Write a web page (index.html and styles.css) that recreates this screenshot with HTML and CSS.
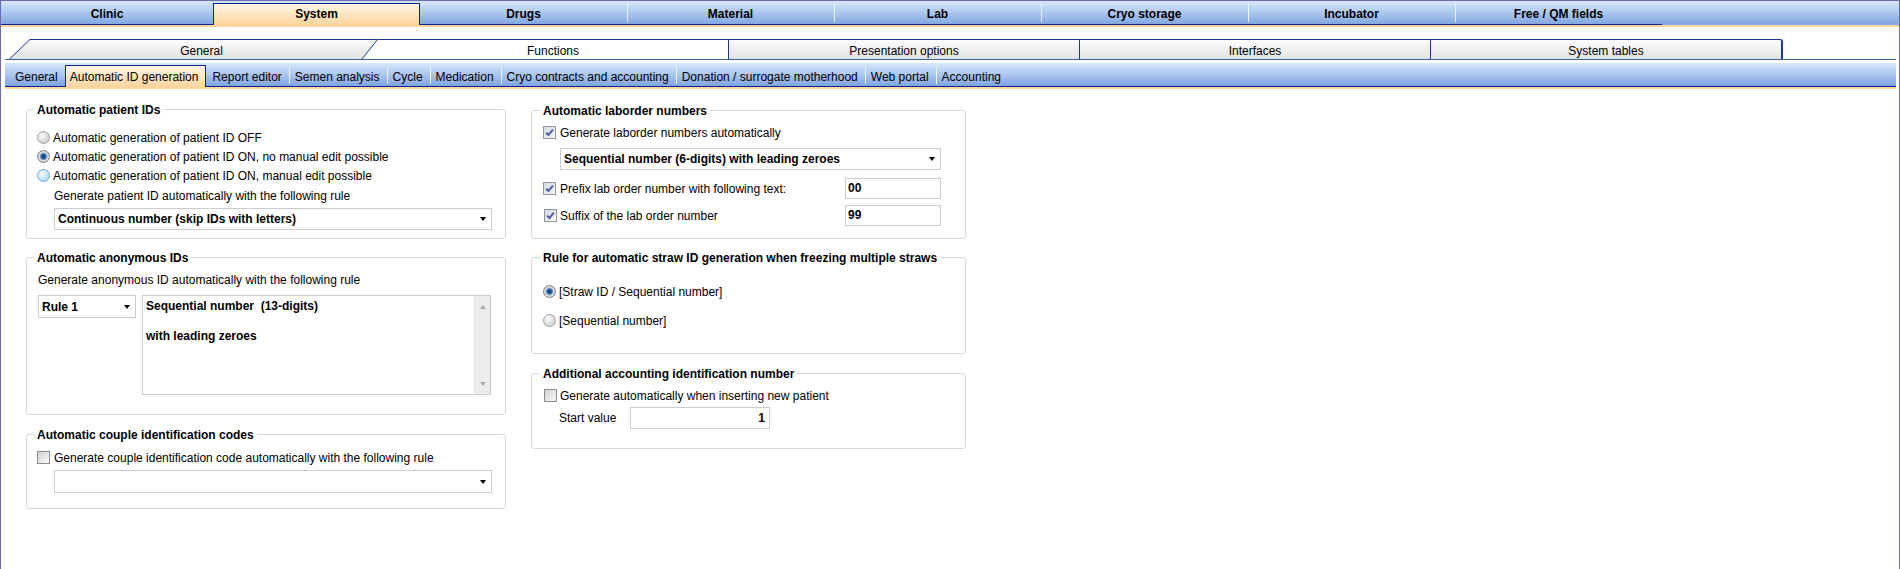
FILE: index.html
```html
<!DOCTYPE html>
<html lang="en">
<head>
<meta charset="utf-8">
<title>System – Functions – Automatic ID generation</title>
<link rel="stylesheet" href="styles.css">
</head>
<body>
<div class="window">
  <nav class="main-tabs">
    <a class="main-tab main-tab--first">Clinic</a>
    <a class="main-tab is-active">System</a>
    <a class="main-tab">Drugs</a>
    <a class="main-tab">Material</a>
    <a class="main-tab">Lab</a>
    <a class="main-tab">Cryo storage</a>
    <a class="main-tab">Incubator</a>
    <a class="main-tab">Free / QM fields</a>
  </nav>

  <div class="section-tabs">
    <a class="section-tab section-tab--slanted">General</a>
    <a class="section-tab is-active">Functions</a>
    <a class="section-tab">Presentation options</a>
    <a class="section-tab">Interfaces</a>
    <a class="section-tab section-tab--last">System tables</a>
  </div>

  <nav class="page-tabs">
    <a class="page-tab">General</a>
    <a class="page-tab is-active">Automatic ID generation</a>
    <a class="page-tab">Report editor</a>
    <a class="page-tab">Semen analysis</a>
    <a class="page-tab">Cycle</a>
    <a class="page-tab">Medication</a>
    <a class="page-tab">Cryo contracts and accounting</a>
    <a class="page-tab">Donation / surrogate motherhood</a>
    <a class="page-tab">Web portal</a>
    <a class="page-tab">Accounting</a>
  </nav>

  <main class="settings">
    <div class="settings__col settings__col--left">
      <section class="group group--patient">
        <h3 class="group__title">Automatic patient IDs</h3>
        <div class="choice-list">
          <label class="choice"><span class="radio"></span>Automatic generation of patient ID OFF</label>
          <label class="choice"><span class="radio is-on"></span>Automatic generation of patient ID ON, no manual edit possible</label>
          <label class="choice"><span class="radio is-hover"></span>Automatic generation of patient ID ON, manual edit possible</label>
        </div>
        <div class="indent">
          <p class="hint hint--patient">Generate patient ID automatically with the following rule</p>
          <div class="combo combo--patient"><span class="combo__value">Continuous number (skip IDs with letters)</span></div>
        </div>
      </section>

      <section class="group group--anon">
        <h3 class="group__title">Automatic anonymous IDs</h3>
        <p class="hint hint--anon">Generate anonymous ID automatically with the following rule</p>
        <div class="rule-row">
          <div class="combo combo--rule"><span class="combo__value">Rule 1</span></div>
          <div class="memo">
            <p class="memo__text">Sequential number&nbsp; (13-digits)<br><br>with leading zeroes</p>
            <div class="memo__scroll">
              <span class="memo__arrow memo__arrow--up"></span>
              <span class="memo__arrow memo__arrow--down"></span>
            </div>
          </div>
        </div>
      </section>

      <section class="group group--couple">
        <h3 class="group__title">Automatic couple identification codes</h3>
        <label class="choice choice--couple"><span class="check"></span>Generate couple identification code automatically with the following rule</label>
        <div class="indent">
          <div class="combo combo--couple"><span class="combo__value"></span></div>
        </div>
      </section>
    </div>

    <div class="settings__col settings__col--right">
      <section class="group group--wide group--laborder">
        <h3 class="group__title">Automatic laborder numbers</h3>
        <label class="choice choice--laborder">
          <span class="check is-on"><svg viewBox="0 0 11 11"><path d="M2.2 5.6 L4.4 8 L8.9 2.6" fill="none" stroke="#4a58ab" stroke-width="1.9"/></svg></span>Generate laborder numbers automatically
        </label>
        <div class="indent indent--wide">
          <div class="combo combo--laborder"><span class="combo__value">Sequential number (6-digits) with leading zeroes</span></div>
        </div>
        <div class="field-row field-row--prefix">
          <label class="choice">
            <span class="check is-on"><svg viewBox="0 0 11 11"><path d="M2.2 5.6 L4.4 8 L8.9 2.6" fill="none" stroke="#4a58ab" stroke-width="1.9"/></svg></span>Prefix lab order number with following text:
          </label>
          <span class="textbox">00</span>
        </div>
        <div class="field-row field-row--suffix">
          <label class="choice">
            <span class="check is-on"><svg viewBox="0 0 11 11"><path d="M2.2 5.6 L4.4 8 L8.9 2.6" fill="none" stroke="#4a58ab" stroke-width="1.9"/></svg></span>Suffix of the lab order number
          </label>
          <span class="textbox">99</span>
        </div>
      </section>

      <section class="group group--wide group--straw">
        <h3 class="group__title">Rule for automatic straw ID generation when freezing multiple straws</h3>
        <label class="choice choice--straw-first"><span class="radio is-on"></span>[Straw ID / Sequential number]</label>
        <label class="choice choice--straw-second"><span class="radio"></span>[Sequential number]</label>
      </section>

      <section class="group group--wide group--accounting">
        <h3 class="group__title">Additional accounting identification number</h3>
        <label class="choice choice--accounting"><span class="check"></span>Generate automatically when inserting new patient</label>
        <div class="start-row">
          <span class="start-row__label">Start value</span>
          <span class="textbox textbox--number">1</span>
        </div>
      </section>
    </div>
  </main>
</div>
</body>
</html>
```

FILE: styles.css
```css
* {
  box-sizing: border-box;
}

html,
body {
  margin: 0;
  background: #fff;
}

body {
  font: 12px/14px "Liberation Sans", Arial, sans-serif;
  color: #000;
}

p,
h3 {
  margin: 0;
}

a {
  color: inherit;
  text-decoration: none;
}

.window {
  height: 569px;
  border: 1px solid #6b6bb6;
  border-bottom: 0;
  overflow: hidden;
  background: #fff;
}

/* ---- top level module tabs ---- */
.main-tabs {
  display: flex;
  height: 26px;
  border-bottom: 2px solid #fdd59d;
  background: linear-gradient(#d7e8fb, #7fa4e1);
}

.main-tab {
  flex: none;
  width: 207px;
  height: 24px;
  padding-top: 6px;
  line-height: 15px;
  text-align: center;
  font-weight: bold;
  border-bottom: 1px solid #0d2291;
  background: linear-gradient(#eef4fd, #eef4fd) 0 3px / 1px 18px no-repeat;
}

.main-tab--first {
  width: 212px;
  background: none;
}

.main-tab.is-active {
  margin-top: 2px;
  height: 22px;
  padding-top: 3px;
  border: 1px solid #0d2291;
  border-bottom: 0;
  background: linear-gradient(#fff5e4, #fdd59d);
}

.main-tab.is-active + .main-tab {
  background: none;
}

/* ---- section tabs (General / Functions / ...) ---- */
.section-tabs {
  display: flex;
  height: 21px;
  margin: 12px 3px 0 4px;
  padding-left: 4px;
  border-bottom: 1px solid #3e5e9e;
}

.section-tab {
  flex: none;
  width: 351px;
  height: 20px;
  padding-top: 3px;
  line-height: 16px;
  text-align: center;
  border-top: 1px solid #1b3b9b;
  border-left: 1px solid #1b3b9b;
  background: linear-gradient(#fdfdfd, #e2e2e2);
}

.section-tab--slanted {
  width: 369px;
  padding: 4px 0 0 16px;
  border: 0;
  background: url("data:image/svg+xml,%3Csvg xmlns='http://www.w3.org/2000/svg' width='369' height='20'%3E%3Cdefs%3E%3ClinearGradient id='g' x1='0' y1='0' x2='0' y2='1'%3E%3Cstop offset='0' stop-color='%23fdfdfd'/%3E%3Cstop offset='1' stop-color='%23e2e2e2'/%3E%3C/linearGradient%3E%3C/defs%3E%3Cpolygon points='0,20 21,0 369,0 353,20' fill='url(%23g)'/%3E%3Cpath d='M0.5 20 L21 0.5 L368.5 0.5 L353 20' fill='none' stroke='%231b3b9b'/%3E%3C/svg%3E") no-repeat;
}

.section-tab.is-active {
  width: 350px;
  border-left: 0;
  background: #fff;
}

.section-tab--last {
  width: 353px;
  border-right: 2px solid #1b3b9b;
  border-top-right-radius: 3px;
}

/* ---- page tabs ---- */
.page-tabs {
  display: flex;
  height: 24px;
  margin: 3px 3px 0 4px;
  padding-left: 4px;
  border-bottom: 1px solid #0d2291;
  background: linear-gradient(#d7e8fb, #80a5e1);
  box-shadow: 0 2px 0 #fdd59d;
}

.page-tab {
  flex: none;
  height: 23px;
  padding: 6px 7px 0 6px;
  line-height: 16px;
  background: linear-gradient(#eef4fd, #eef4fd) 0 4px / 1px 17px no-repeat;
}

.page-tab:first-child {
  background: none;
}

.page-tab.is-active {
  margin-top: 2px;
  height: 22px;
  padding: 3px 7px 0 4px;
  border: 1px solid #0d2291;
  border-bottom: 0;
  background: linear-gradient(#fff5e4, #fdd59d);
}

.page-tab.is-active + .page-tab {
  background: none;
}

/* ---- settings panel ---- */
.settings {
  display: flex;
  align-items: flex-start;
  padding: 22px 0 0 25px;
}

.settings__col--left {
  width: 480px;
}

.settings__col--right {
  width: 435px;
  margin-left: 25px;
  padding-top: 1px;
}

.group {
  border: 1px solid #d2dbe3;
  border-radius: 3px;
  padding: 0 13px 0 10px;
}

.group--wide {
  padding: 0 24px 0 11px;
}

.group + .group {
  margin-top: 18px;
}

.group--couple,
.group--accounting {
  margin-top: 19px !important;
}

.group--patient { height: 130px; }
.group--anon { height: 158px; }
.group--couple { height: 75px; }
.group--laborder { height: 129px; }
.group--straw { height: 97px; }
.group--accounting { height: 76px; }

.group__title {
  width: fit-content;
  margin: -7px 0 0 -3px;
  padding: 0 3px;
  font-size: 12px;
  line-height: 14px;
  font-weight: bold;
  background: #fff;
}

.choice {
  display: flex;
  align-items: center;
  height: 19px;
  white-space: nowrap;
}

.choice-list {
  margin-top: 11px;
}

.indent {
  padding-left: 17px;
}

.hint {
  height: 19px;
  line-height: 19px;
}

.hint--patient {
  margin-top: 2px;
}

.hint--anon {
  margin: 6px 0 0 1px;
}

/* radio buttons */
.radio {
  flex: none;
  width: 13px;
  height: 13px;
  margin-right: 3px;
  border-radius: 50%;
  border: 1px solid #a3a3a3;
  background: radial-gradient(circle at 35% 35%, #fbfbfb, #d2d2d2 75%);
}

.radio.is-on {
  border-color: #7e7e7e;
  background: radial-gradient(circle, #0f3d7b 0, #2b62a3 2.4px, #8eafd2 3.4px, #dedede 4.4px, #c4c4c4 100%);
}

.radio.is-hover {
  border-color: #6ba7d8;
  background: radial-gradient(circle at 35% 35%, #f2faff, #b7dbf5 75%);
}

/* check boxes */
.check {
  flex: none;
  display: flex;
  align-items: center;
  justify-content: center;
  width: 13px;
  height: 13px;
  margin-right: 4px;
  border: 1px solid #8e8e8e;
  background: linear-gradient(135deg, #d5d5d5, #f7f7f7);
}

.check.is-on {
  border-color: #8f96a3;
  background: linear-gradient(135deg, #d3d8e2, #f4f6fa);
}

.check svg {
  display: block;
  width: 11px;
  height: 11px;
}

/* combo boxes */
.combo {
  display: flex;
  align-items: center;
  height: 22px;
  padding: 0 5px 0 3px;
  border: 1px solid #c9cdd1;
  background: #fff;
  font-weight: bold;
}

.combo__value {
  flex: 1;
  white-space: nowrap;
}

.combo::after {
  content: "";
  flex: none;
  border-top: 4px solid #000;
  border-left: 3.5px solid transparent;
  border-right: 3.5px solid transparent;
}

.combo--patient {
  margin-top: 2px;
}

.combo--rule {
  flex: none;
  width: 98px;
  height: 23px;
}

.combo--couple {
  height: 23px;
  margin-top: 3px;
}

.combo--laborder {
  margin-top: 6px;
}

.indent--wide {
  padding-left: 17px;
}

/* multi-line rule description */
.rule-row {
  display: flex;
  gap: 6px;
  margin: 5px 0 0 1px;
}

.memo {
  display: flex;
  width: 349px;
  height: 100px;
  border: 1px solid #c9cdd1;
}

.memo__text {
  flex: 1;
  padding: 3px;
  line-height: 15px;
  font-weight: bold;
}

.memo__scroll {
  flex: none;
  display: flex;
  flex-direction: column;
  justify-content: space-between;
  align-items: center;
  width: 16px;
  padding: 9px 0 8px;
  background: #ececec;
  border-left: 1px solid #e2e2e2;
}

.memo__arrow {
  border-left: 3.5px solid transparent;
  border-right: 3.5px solid transparent;
}

.memo__arrow--up {
  border-bottom: 4px solid #a8a8a8;
}

.memo__arrow--down {
  border-top: 4px solid #a8a8a8;
}

/* couple codes */
.choice--couple {
  margin-top: 6px;
}

/* lab order numbers */
.choice--laborder {
  margin-top: 5px;
}

.field-row {
  display: flex;
  align-items: center;
  height: 21px;
}

.field-row--prefix {
  margin-top: 8px;
}

.field-row--suffix {
  margin-top: 6px;
}

.field-row--suffix .check {
  margin-left: 1px;
  margin-right: 3px;
}

.textbox {
  flex: none;
  width: 96px;
  height: 21px;
  margin-left: auto;
  padding: 0 2px;
  line-height: 19px;
  border: 1px solid #c9cdd1;
  background: #fff;
  font-weight: bold;
}

/* straw ids */
.choice--straw-first {
  margin-top: 17px;
}

.choice--straw-second {
  margin-top: 10px;
}

/* accounting number */
.choice--accounting {
  margin-top: 5px;
}

.choice--accounting .check {
  margin-left: 1px;
  margin-right: 3px;
}

.start-row {
  display: flex;
  align-items: center;
  height: 22px;
  margin-top: 2px;
  padding-left: 16px;
}

.start-row__label {
  width: 71px;
}

.textbox--number {
  width: 140px;
  height: 22px;
  margin-left: 0;
  padding-right: 4px;
  line-height: 20px;
  text-align: right;
}
```
